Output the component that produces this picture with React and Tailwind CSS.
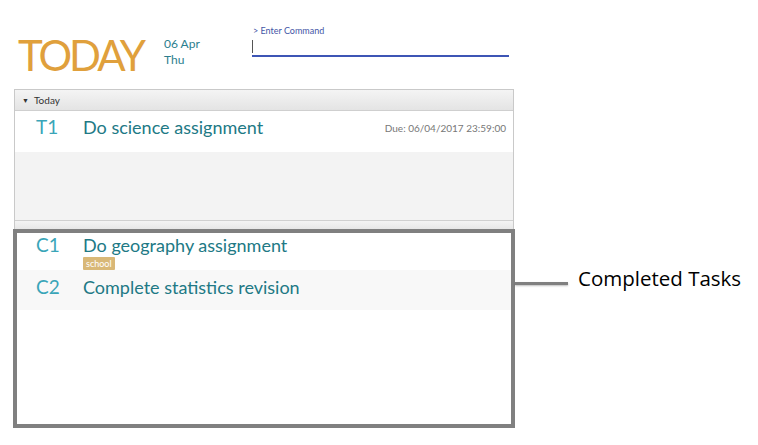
import React from 'react';

const tasks = [
    { id: 'C1', name: 'Do geography assignment', tags: ['school'] },
    { id: 'C2', name: 'Complete statistics revision', tags: [] },
];

function SectionHeader({ label, className = '' }) {
    return (
        <div className={`flex items-center pl-[7px] bg-gradient-to-b from-[#f4f4f4] to-[#e4e4e4] border-b border-[#cfcfcf] text-[10px] text-[#333] ${className}`}>
            {label && <span className="text-[7px] mr-[5px]">▼</span>}
            {label}
        </div>
    );
}

export default function App() {
    return (
        <div className="relative w-[758px] h-[445px] overflow-hidden bg-white font-['Lato','Open_Sans',sans-serif]">
            {/* top bar */}
            <div className="flex items-start h-[89px]">
                <div className="ml-[18px] w-[146px] mt-[34px] text-[42px] leading-none text-[#e0a03c] tracking-[-3px]">TODAY</div>
                <div className="w-[88px] mt-[36px] text-[12px] leading-[16px] text-[#2b7e8e]">
                    <p>06 Apr</p>
                    <p>Thu</p>
                </div>
                <div className="mt-[25px] w-[257px]">
                    <p className="text-[9px] leading-[12px] text-[#4456a6] pl-[1px]">&gt; Enter Command</p>
                    <div className="h-[20px] border-b-2 border-[#3d55b5] flex items-center">
                        <span className="w-px h-[13px] bg-[#555]" />
                    </div>
                </div>
            </div>

            {/* task list */}
            <div className="ml-[14px] w-[500px] h-[339px] border border-[#c9c9c9] flex flex-col">
                <SectionHeader label="Today" className="h-[21px]" />
                <div className="h-[41px] flex items-start bg-white pt-[4px]">
                    <span className="ml-[21px] w-[47px] text-[19px] leading-[24px] text-[#3aa5b8]">T1</span>
                    <span className="text-[18px] leading-[24px] text-[#217985]">Do science assignment</span>
                    <span className="ml-auto mr-[7px] mt-[6px] text-[10px] text-[#777]">Due: 06/04/2017 23:59:00</span>
                </div>
                <div className="h-[69px] bg-[#f3f3f3] border-b border-[#d0d0d0]" />
                <SectionHeader label="" className="h-[11px]" />
                {tasks.map((task, i) => (
                    <div key={task.id} className={`flex items-start ${i % 2 ? 'h-[40px] bg-[#f8f8f8] pt-[5px]' : 'h-[38px] bg-white pt-[1px]'}`}>
                        <span className="ml-[21px] w-[47px] text-[19px] leading-[24px] text-[#3aa5b8]">{task.id}</span>
                        <div className="flex flex-col items-start">
                            <span className="text-[18px] leading-[24px] text-[#217985]">{task.name}</span>
                            {task.tags.map((tag) => (
                                <span key={tag} className="px-[3px] h-[13px] bg-[#d9b877] text-white text-[9px] leading-[13px] rounded-[1px]">{tag}</span>
                            ))}
                        </div>
                    </div>
                ))}
                <div className="flex-1 bg-white" />
            </div>

            {/* annotation */}
            <div className="absolute left-[13px] top-[229px] w-[502px] h-[199px] border-4 border-[#808080]" />
            <div className="absolute left-[515px] top-[282px] w-[53px] h-[3px] bg-[#808080] shadow-[0_1px_2px_rgba(0,0,0,0.25)]" />
            <div className="absolute left-[578px] top-[264px] font-['Open_Sans',sans-serif] text-[20.5px] leading-[28px] text-black">Completed Tasks</div>
        </div>
    );
}
